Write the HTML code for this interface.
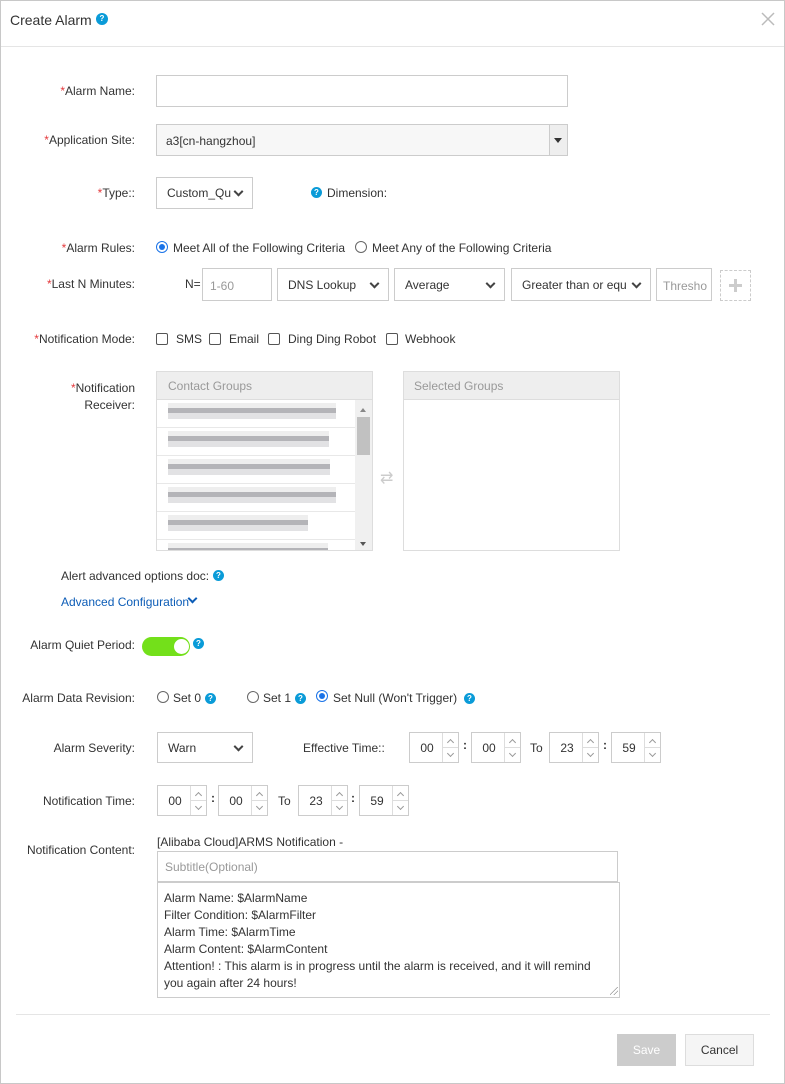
<!DOCTYPE html>
<html><head><meta charset="utf-8"><style>
*{box-sizing:border-box;margin:0;padding:0}
body{width:785px;height:1084px;background:#fff;font-family:"Liberation Sans",sans-serif;font-size:12px;color:#333;position:relative;overflow:hidden}
.a{position:absolute;white-space:nowrap}
.lbl{position:absolute;right:650px;white-space:nowrap;text-align:right}
.r{color:#e4393c}
.box{position:absolute;border:1px solid #ccc;background:#fff}
.sel{position:absolute;border:1px solid #ccc;background:#fff;padding-left:10px;display:flex;align-items:center}
.sel::after{content:"";position:absolute;right:10px;top:50%;width:5px;height:5px;border-right:2px solid #444;border-bottom:2px solid #444;transform:translateY(-70%) rotate(45deg)}
.q{position:absolute;width:11px;height:11px;border-radius:50%;background:#0a9bd8;color:#fff;font-size:8px;font-weight:bold;line-height:11px;text-align:center}
.rad{position:absolute;width:12px;height:12px;border:1px solid #666;border-radius:50%;background:#fff}
.rad.on{border-color:#1a73e8}
.rad.on::after{content:"";position:absolute;left:2px;top:2px;width:6px;height:6px;border-radius:50%;background:#1a73e8}
.cb{position:absolute;width:12px;height:12px;border:1px solid #555;border-radius:2px}
.sp{position:absolute;border:1px solid #ccc;height:31px;width:50px;background:#fff}
.sp span{position:absolute;left:0;width:34px;text-align:center;top:8px}
.sp i{position:absolute;right:0;top:0;width:16px;height:29px;border-left:1px solid #ddd}
.sp i::before{content:"";position:absolute;left:5px;top:7px;width:4px;height:4px;border-left:1px solid #999;border-top:1px solid #999;transform:rotate(45deg)}
.sp i::after{content:"";position:absolute;left:5px;top:18px;width:4px;height:4px;border-right:1px solid #999;border-bottom:1px solid #999;transform:rotate(45deg)}
.sp b{position:absolute;right:0;top:14px;width:16px;border-top:1px solid #ddd}
.row{position:absolute;left:11px;height:16px;background:linear-gradient(180deg,#eee 0,#eee 30%,#b4b4b8 30%,#b4b4b8 62%,#e2e2e4 62%)}
.sepr{position:absolute;left:0;width:198px;border-top:1px solid #e8e8e8}
</style></head><body>
<div class="a" style="left:0;top:0;width:785px;height:1084px;border:1px solid #c8c8c8"></div>
<div class="a" style="left:10px;top:12px;font-size:14px;color:#333">Create Alarm</div>
<div class="q" style="left:96px;top:13px;width:12px;height:12px;line-height:12px">?</div>
<svg class="a" style="left:761px;top:12px" width="14" height="14"><path d="M1 1L13 13M13 1L1 13" stroke="#bbb" stroke-width="1.5"/></svg>
<div class="a" style="left:1px;top:46px;width:783px;border-top:1px solid #e5e5e5"></div>

<div class="lbl" style="top:84px"><span class="r">*</span>Alarm Name:</div>
<div class="box" style="left:156px;top:75px;width:412px;height:32px"></div>

<div class="lbl" style="top:133px"><span class="r">*</span>Application Site:</div>
<div class="box" style="left:156px;top:124px;width:412px;height:32px;background:#f7f7f7;padding:9px 0 0 9px">a3[cn-hangzhou]</div>
<div class="a" style="left:549px;top:125px;width:18px;height:30px;background:#eee;border-left:1px solid #ccc"></div>
<div class="a" style="left:554px;top:138px;border:4px solid transparent;border-top:5px solid #333"></div>

<div class="lbl" style="top:186px"><span class="r">*</span>Type::</div>
<div class="sel" style="left:156px;top:177px;width:97px;height:32px">Custom_Qu</div>
<div class="q" style="left:311px;top:187px">?</div>
<div class="a" style="left:327px;top:186px">Dimension:</div>

<div class="lbl" style="top:241px"><span class="r">*</span>Alarm Rules:</div>
<div class="rad on" style="left:156px;top:241px"></div>
<div class="a" style="left:173px;top:241px">Meet All of the Following Criteria</div>
<div class="rad" style="left:355px;top:241px"></div>
<div class="a" style="left:372px;top:241px">Meet Any of the Following Criteria</div>

<div class="lbl" style="top:277px"><span class="r">*</span>Last N Minutes:</div>
<div class="a" style="left:185px;top:277px">N=</div>
<div class="box" style="left:202px;top:268px;width:70px;height:33px;color:#999;padding:10px 0 0 7px">1-60</div>
<div class="sel" style="left:277px;top:268px;width:112px;height:33px">DNS Lookup</div>
<div class="sel" style="left:394px;top:268px;width:111px;height:33px">Average</div>
<div class="sel" style="left:511px;top:268px;width:140px;height:33px">Greater than or equ</div>
<div class="box" style="left:656px;top:268px;width:56px;height:33px;color:#999;padding:10px 0 0 6px;overflow:hidden">Thresho</div>
<div class="a" style="left:720px;top:270px;width:31px;height:31px;border:1px dashed #ccc"></div>
<div class="a" style="left:729px;top:284px;width:13px;height:3px;background:#ccc"></div>
<div class="a" style="left:734px;top:279px;width:3px;height:13px;background:#ccc"></div>

<div class="lbl" style="top:332px"><span class="r">*</span>Notification Mode:</div>
<div class="cb" style="left:156px;top:333px"></div><div class="a" style="left:176px;top:332px">SMS</div>
<div class="cb" style="left:209px;top:333px"></div><div class="a" style="left:229px;top:332px">Email</div>
<div class="cb" style="left:268px;top:333px"></div><div class="a" style="left:288px;top:332px">Ding Ding Robot</div>
<div class="cb" style="left:386px;top:333px"></div><div class="a" style="left:405px;top:332px">Webhook</div>

<div class="lbl" style="top:380px;line-height:17px"><span class="r">*</span>Notification<br>Receiver:</div>
<div class="box" style="left:156px;top:371px;width:217px;height:180px;border-color:#ddd;overflow:hidden">
<div class="a" style="left:0;top:0;width:216px;height:28px;background:#eee;border-bottom:1px solid #ddd;color:#999;padding:7px 0 0 11px">Contact Groups</div>
<div class="row" style="top:31px;width:168px"></div>
<div class="sepr" style="top:55px"></div>
<div class="row" style="top:59px;width:161px"></div>
<div class="sepr" style="top:83px"></div>
<div class="row" style="top:87px;width:162px"></div>
<div class="sepr" style="top:111px"></div>
<div class="row" style="top:115px;width:168px"></div>
<div class="sepr" style="top:139px"></div>
<div class="row" style="top:143px;width:140px"></div>
<div class="sepr" style="top:167px"></div>
<div class="row" style="top:171px;width:160px"></div>
<div class="a" style="left:198px;top:28px;width:17px;height:152px;background:#f0f0f0"></div>
<div class="a" style="left:200px;top:45px;width:13px;height:38px;background:#c1c1c1"></div>
<div class="a" style="left:203px;top:33px;border:3px solid transparent;border-bottom:4px solid #888"></div>
<div class="a" style="left:203px;top:170px;border:3px solid transparent;border-top:4px solid #555"></div>
</div>
<div class="a" style="left:380px;top:468px;color:#ccc;font-size:16px">⇄</div>
<div class="box" style="left:403px;top:371px;width:217px;height:180px;border-color:#ddd">
<div class="a" style="left:0;top:0;width:215px;height:28px;background:#eee;border-bottom:1px solid #ddd;color:#999;padding:7px 0 0 10px">Selected Groups</div>
</div>

<div class="a" style="left:61px;top:569px">Alert advanced options doc:</div>
<div class="q" style="left:213px;top:570px">?</div>
<div class="a" style="left:61px;top:595px;color:#0d5db7">Advanced Configuration</div>
<div class="a" style="left:189px;top:595px;width:7px;height:7px;border-right:2px solid #0d5db7;border-bottom:2px solid #0d5db7;transform:rotate(45deg)"></div>

<div class="lbl" style="top:638px">Alarm Quiet Period:</div>
<div class="a" style="left:142px;top:637px;width:48px;height:19px;border-radius:10px;background:#73e01a"></div>
<div class="a" style="left:174px;top:639px;width:15px;height:15px;border-radius:50%;background:#fff"></div>
<div class="q" style="left:193px;top:638px">?</div>

<div class="lbl" style="top:691px">Alarm Data Revision:</div>
<div class="rad" style="left:157px;top:691px"></div><div class="a" style="left:173px;top:691px">Set 0</div><div class="q" style="left:205px;top:693px">?</div>
<div class="rad" style="left:247px;top:691px"></div><div class="a" style="left:263px;top:691px">Set 1</div><div class="q" style="left:295px;top:693px">?</div>
<div class="rad on" style="left:316px;top:690px"></div><div class="a" style="left:333px;top:691px">Set Null (Won't Trigger)</div><div class="q" style="left:464px;top:693px">?</div>

<div class="lbl" style="top:741px">Alarm Severity:</div>
<div class="sel" style="left:157px;top:732px;width:96px;height:31px">Warn</div>
<div class="a" style="left:303px;top:741px">Effective Time::</div>
<div class="sp" style="left:409px;top:732px"><span>00</span><i></i><b></b></div>
<div class="a" style="left:463px;top:738px;font-weight:bold">:</div>
<div class="sp" style="left:471px;top:732px"><span>00</span><i></i><b></b></div>
<div class="a" style="left:530px;top:741px">To</div>
<div class="sp" style="left:549px;top:732px"><span>23</span><i></i><b></b></div>
<div class="a" style="left:603px;top:738px;font-weight:bold">:</div>
<div class="sp" style="left:611px;top:732px"><span>59</span><i></i><b></b></div>

<div class="lbl" style="top:794px">Notification Time:</div>
<div class="sp" style="left:157px;top:785px"><span>00</span><i></i><b></b></div>
<div class="a" style="left:211px;top:791px;font-weight:bold">:</div>
<div class="sp" style="left:218px;top:785px"><span>00</span><i></i><b></b></div>
<div class="a" style="left:278px;top:794px">To</div>
<div class="sp" style="left:298px;top:785px"><span>23</span><i></i><b></b></div>
<div class="a" style="left:351px;top:791px;font-weight:bold">:</div>
<div class="sp" style="left:359px;top:785px"><span>59</span><i></i><b></b></div>

<div class="lbl" style="top:843px">Notification Content:</div>
<div class="a" style="left:157px;top:835px">[Alibaba Cloud]ARMS Notification -</div>
<div class="box" style="left:157px;top:851px;width:461px;height:31px;color:#999;padding:8px 0 0 7px">Subtitle(Optional)</div>
<div class="box" style="left:157px;top:882px;width:463px;height:116px;padding:7px 12px 0 6px;line-height:17px;white-space:normal">Alarm Name: $AlarmName<br>Filter Condition: $AlarmFilter<br>Alarm Time: $AlarmTime<br>Alarm Content: $AlarmContent<br>Attention! : This alarm is in progress until the alarm is received, and it will remind you again after 24 hours!</div>
<div class="a" style="left:610px;top:987px;width:8px;height:8px;background:linear-gradient(135deg,transparent 45%,#999 45%,#999 52%,transparent 52%,transparent 70%,#999 70%,#999 77%,transparent 77%)"></div>

<div class="a" style="left:16px;top:1014px;width:754px;border-top:1px solid #e5e5e5"></div>
<div class="a" style="left:617px;top:1034px;width:59px;height:32px;background:#ccc;color:#fff;text-align:center;line-height:32px">Save</div>
<div class="a" style="left:685px;top:1034px;width:69px;height:32px;background:#f5f5f5;border:1px solid #ddd;text-align:center;line-height:30px">Cancel</div>
</body></html>
